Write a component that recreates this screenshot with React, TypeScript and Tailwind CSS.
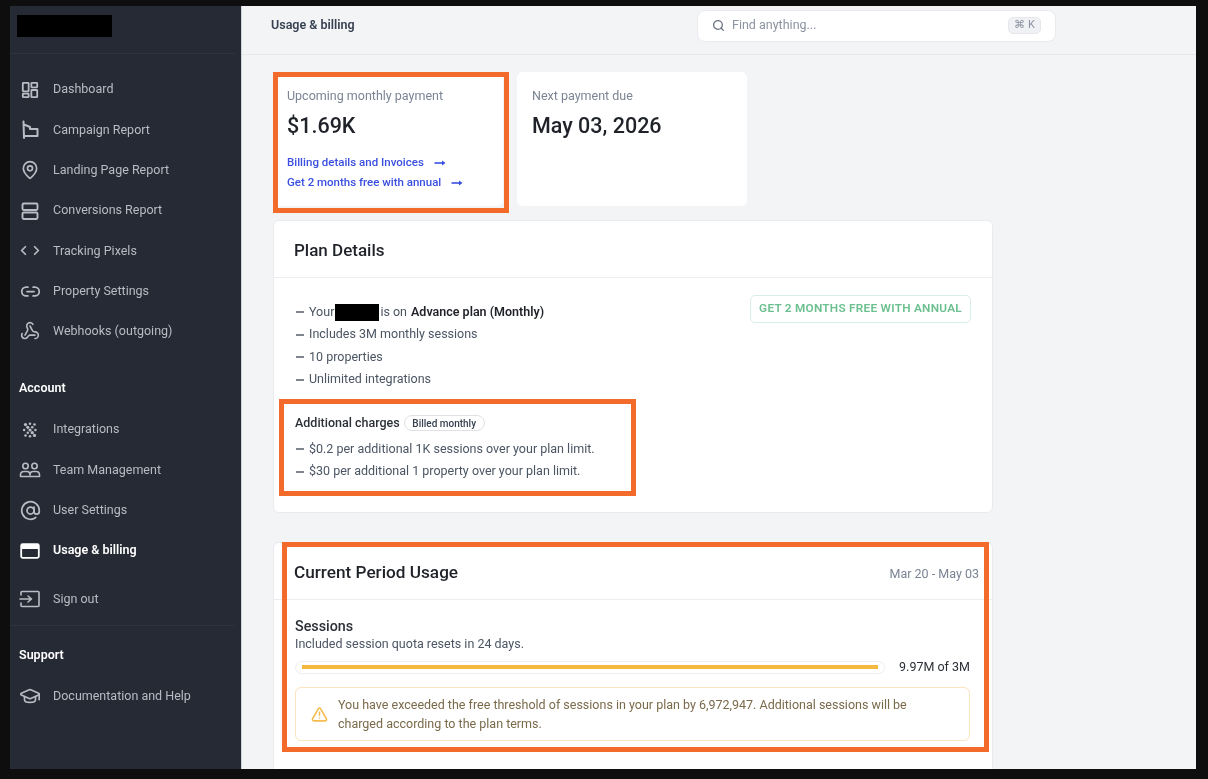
import React from "react";
import { MapPin, Link2, Webhook, AtSign, GraduationCap, Search, ChevronLeft, ChevronRight, TriangleAlert } from "lucide-react";

const S = { fill: "none", stroke: "currentColor", strokeWidth: 2, strokeLinecap: "round" as const, strokeLinejoin: "round" as const };

const DashIcon = () => (
  <svg width="18" height="18" viewBox="0 0 20 20" {...S} strokeWidth={2}>
    <rect x="2" y="2" width="6.5" height="9.5" rx="0.6" /><rect x="11.5" y="2" width="6.5" height="5" rx="0.6" />
    <rect x="2" y="14" width="6.5" height="4" rx="0.6" /><rect x="11.5" y="10" width="6.5" height="8" rx="0.6" />
  </svg>
);
const FlagIcon = () => (
  <svg width="20" height="20" viewBox="0 0 20 20" {...S} strokeWidth={2}>
    <path d="M3.5 1.5 L4 18 M4 4.5 L10 7 L10 9 L17.5 9 L17.5 16 L4 16" />
  </svg>
);
const StackIcon = () => (
  <svg width="20" height="20" viewBox="0 0 20 20" {...S} strokeWidth={1.9}>
    <rect x="2.5" y="2.5" width="15" height="6.5" rx="1.2" /><rect x="2.5" y="11.5" width="15" height="6.5" rx="1.2" />
  </svg>
);
const CodeIcon = () => (
  <span className="flex items-center">
    <ChevronLeft size={15} strokeWidth={2.8} className="-mr-[1px]" />
    <ChevronRight size={15} strokeWidth={2.8} className="-ml-[1px]" />
  </span>
);
const DotsIcon = () => (
  <svg width="18" height="18" viewBox="0 0 20 20" fill="currentColor">
    {[[5,4],[10,3],[15,4],[7.5,7],[12.5,7],[3.5,10],[10,10],[16,10],[7.5,13],[12.5,13],[5,16],[10,17],[15,16]].map(([x, y], i) => (
      <circle key={i} cx={x} cy={y} r={i % 3 === 0 ? 1.8 : 1.4} />
    ))}
  </svg>
);
const TeamIcon = () => (
  <svg width="22" height="20" viewBox="0 0 22 20" {...S} strokeWidth={1.6}>
    <circle cx="6.5" cy="6" r="2.7" /><circle cx="15.5" cy="6" r="2.7" />
    <path d="M1.5 16.5 V15 C1.5 12.5 3 11.5 5 11.5 H8 C10 11.5 11 12.5 11 15 C11 12.5 12 11.5 14 11.5 H17 C19 11.5 20.5 12.5 20.5 15 V16.5 Z" />
  </svg>
);
const CardIcon = () => (
  <svg width="20" height="20" viewBox="0 0 20 20" fill="none">
    <rect x="1.2" y="3.2" width="17.6" height="13.6" rx="1.5" stroke="white" strokeWidth="1.8" />
    <rect x="1.2" y="3.2" width="17.6" height="4.8" fill="white" />
  </svg>
);
const SignOutIcon = () => (
  <svg width="22" height="20" viewBox="0 0 22 20" {...S} strokeWidth={1.6}>
    <path d="M2 6 V3.5 A1 1 0 0 1 3 2.5 H19 A1 1 0 0 1 20 3.5 V16.5 A1 1 0 0 1 19 17.5 H3 A1 1 0 0 1 2 16.5 V14" />
    <path d="M1 10 H12 M9 7 L12.5 10 L9 13" />
  </svg>
);
const LinkArrow = () => (
  <svg width="12" height="8" viewBox="0 0 12 8" className="ml-[10px]">
    <path d="M0.5 4 H9" stroke="currentColor" strokeWidth="1.6" />
    <path d="M8 1.4 L11.5 4 L8 6.6 Z" fill="currentColor" />
  </svg>
);

function NavItem({ icon, label, active, className = "" }: { icon: React.ReactNode; label: string; active?: boolean; className?: string }) {
  return (
    <div className={`flex h-[40.3px] items-center ${active ? "font-semibold text-white" : "text-[#b9bcc3]"} ${className}`}>
      <span className="flex w-[43px] shrink-0 items-center justify-center pr-[4px] pl-[1px]">{icon}</span>
      <span className="text-[12.5px] leading-none">{label}</span>
    </div>
  );
}

function Dash({ children }: { children: React.ReactNode }) {
  return (
    <div className="flex h-[22.5px] items-center text-[12.5px] text-[#4b5563]">
      <span className="mr-[5px] h-[2px] w-[8px] bg-[#80858d]" />
      {children}
    </div>
  );
}

function Frame({ className }: { className: string }) {
  return <div className={`pointer-events-none absolute border-[5px] border-[#f26b2a] ${className}`} />;
}

export default function App() {
  return (
    <div className="relative h-[779px] w-[1208px] overflow-hidden bg-[#0e0e0e] pt-[6px] pr-[12px] pb-[10px] pl-[10px] font-['Roboto',sans-serif] blur-[0.5px]">
      <div className="flex h-[763px]">
        <aside className="w-[231px] shrink-0 bg-[#252a34] pr-[6px]">
          <div className="h-[48px] border-b border-[#2e343e] pt-[9px] pl-[7px]">
            <div className="h-[22px] w-[95px] bg-black" />
          </div>
          <nav className="pt-[15.5px]">
            <NavItem icon={<DashIcon />} label="Dashboard" />
            <NavItem icon={<FlagIcon />} label="Campaign Report" />
            <NavItem icon={<MapPin size={20} strokeWidth={2} />} label="Landing Page Report" />
            <NavItem icon={<StackIcon />} label="Conversions Report" />
            <NavItem icon={<CodeIcon />} label="Tracking Pixels" />
            <NavItem icon={<Link2 size={21} strokeWidth={2} />} label="Property Settings" />
            <NavItem icon={<Webhook size={20} strokeWidth={1.9} />} label="Webhooks (outgoing)" />
          </nav>
          <div className="pt-[26px] pb-[12px] pl-[9px] text-[12.5px] leading-[20px] font-semibold text-white">Account</div>
          <NavItem icon={<DotsIcon />} label="Integrations" />
          <NavItem icon={<TeamIcon />} label="Team Management" />
          <NavItem icon={<AtSign size={21} strokeWidth={2} />} label="User Settings" />
          <NavItem icon={<CardIcon />} label="Usage & billing" active />
          <NavItem icon={<SignOutIcon />} label="Sign out" className="mt-[8px]" />
          <div className="mt-[6px] border-t border-[#2e343e] pt-[19px] pb-[11px] pl-[9px] text-[12.5px] leading-[20px] font-semibold text-white">Support</div>
          <NavItem icon={<GraduationCap size={22} strokeWidth={1.8} />} label="Documentation and Help" />
        </aside>

        <main className="min-w-0 flex-1 overflow-hidden border-l border-[#d1d5db] bg-[#f3f4f6]">
          <header className="flex h-[49px] items-center border-b border-[#e5e7eb] pr-[140px] pb-[9px] pl-[29px]">
            <h1 className="text-[12.5px] font-semibold text-[#374151]">Usage &amp; billing</h1>
            <div className="ml-auto flex h-[32px] w-[359px] items-center rounded-[8px] border border-[#e9ebef] bg-white pr-[14px] pl-[14px]">
              <Search size={13} strokeWidth={2.4} className="text-[#6b7280]" />
              <span className="ml-[7px] text-[12.5px] text-[#8b93a0]">Find anything...</span>
              <span className="ml-auto flex h-[17px] w-[33px] items-center justify-center rounded-[5px] border border-[#e5e7eb] bg-[#f0f1f4] text-[11px] text-[#8b93a0]">⌘ K</span>
            </div>
          </header>

          <div className="box-content w-[720px] pt-[17px] pl-[31px]">
            <div className="flex gap-[14px]">
              <section className="h-[134px] w-[230px] rounded-[6px] bg-white pt-[15px] pl-[14px]">
                <p className="text-[12.5px] leading-[18px] text-[#7b8494]">Upcoming monthly payment</p>
                <p className="mt-[6px] text-[21.5px] leading-[30px] font-medium text-[#1f2228]">$1.69K</p>
                <a className="mt-[12px] flex h-[20px] items-center text-[11.5px] font-medium text-[#3a4fe0]">
                  Billing details and Invoices<LinkArrow />
                </a>
                <a className="flex h-[20px] items-center text-[11.5px] font-medium text-[#3a4fe0]">
                  Get 2 months free with annual<LinkArrow />
                </a>
              </section>
              <section className="h-[134px] w-[230px] rounded-[6px] bg-white pt-[15px] pl-[15px]">
                <p className="text-[12.5px] leading-[18px] text-[#7b8494]">Next payment due</p>
                <p className="mt-[6px] text-[21.5px] leading-[30px] font-medium text-[#1f2228]">May 03, 2026</p>
              </section>
            </div>

            <section className="mt-[14px] h-[293px] w-[720px] rounded-[6px] border border-[#e9ebef] bg-white">
              <h2 className="flex h-[57px] items-center border-b border-[#eceef1] pt-[4px] pl-[20px] text-[17px] font-medium text-[#1f2228]">Plan Details</h2>
              <div className="relative pt-[23px] pl-[22px]">
                <Dash>
                  Your<span className="mx-[1px] h-[17px] w-[44px] bg-black" />is on<b className="ml-[4px] font-semibold text-[#1f2228]">Advance plan (Monthly)</b>
                </Dash>
                <Dash>Includes 3M monthly sessions</Dash>
                <Dash>10 properties</Dash>
                <Dash>Unlimited integrations</Dash>
                <div className="mt-[20px] -ml-[1px] flex h-[24px] items-center text-[12.5px] font-medium text-[#2b2f36]">
                  Additional charges
                  <span className="ml-[4px] flex h-[16px] w-[81px] items-center justify-center rounded-full border border-[#dfe1e6] text-[10px] font-medium text-[#374151]">Billed monthly</span>
                </div>
                <div className="mt-[3px]">
                  <Dash>$0.2 per additional 1K sessions over your plan limit.</Dash>
                  <Dash>$30 per additional 1 property over your plan limit.</Dash>
                </div>
                <span className="absolute top-[17px] right-[21px] flex h-[28px] w-[221px] items-center justify-center rounded-[5px] border border-[#d8efe3] text-[11.8px] font-semibold tracking-[0.25px] text-[#6cc08f]">GET 2 MONTHS FREE WITH ANNUAL</span>
              </div>
            </section>

            <section className="mt-[29px] h-[300px] w-[720px] rounded-[6px] border border-[#e9ebef] bg-white">
              <div className="flex h-[57px] items-center justify-between border-b border-[#eceef1] pr-[13px] pl-[20px]">
                <h2 className="pt-[4px] text-[17.2px] font-medium text-[#1f2228]">Current Period Usage</h2>
                <span className="pt-[7px] text-[12.5px] text-[#7b8494]">Mar 20 - May 03</span>
              </div>
              <div className="pt-[17px] pr-[22px] pl-[21px]">
                <h3 className="text-[14.3px] leading-[18px] font-medium text-[#2b2f36]">Sessions</h3>
                <p className="text-[12.5px] leading-[18px] text-[#4b5563]">Included session quota resets in 24 days.</p>
                <div className="mt-[5px] flex items-center">
                  <div className="flex h-[13px] w-[590px] items-center rounded-full border border-[#eceef1] pr-[6px] pl-[6px]">
                    <div className="h-[4px] w-full bg-[#f6b93f]" />
                  </div>
                  <span className="ml-auto text-[12.5px] text-[#2b2f36]">9.97M of 3M</span>
                </div>
                <div className="mt-[10px] flex h-[54px] items-center rounded-[6px] border border-[#fbe5bd] pr-[40px] pl-[15px]">
                  <TriangleAlert size={17} strokeWidth={2.2} className="mt-[2px] shrink-0 text-[#f6bc4f]" />
                  <p className="ml-[10px] pt-[1px] text-[12.5px] leading-[19.5px] text-[#7a6a4a]">You have exceeded the free threshold of sessions in your plan by 6,972,947. Additional sessions will be charged according to the plan terms.</p>
                </div>
              </div>
            </section>
          </div>
        </main>
      </div>

      <Frame className="top-[72px] left-[273px] h-[141px] w-[236px]" />
      <Frame className="top-[399px] left-[279px] h-[97px] w-[357px]" />
      <Frame className="top-[542px] left-[282px] h-[210px] w-[707px]" />
    </div>
  );
}
